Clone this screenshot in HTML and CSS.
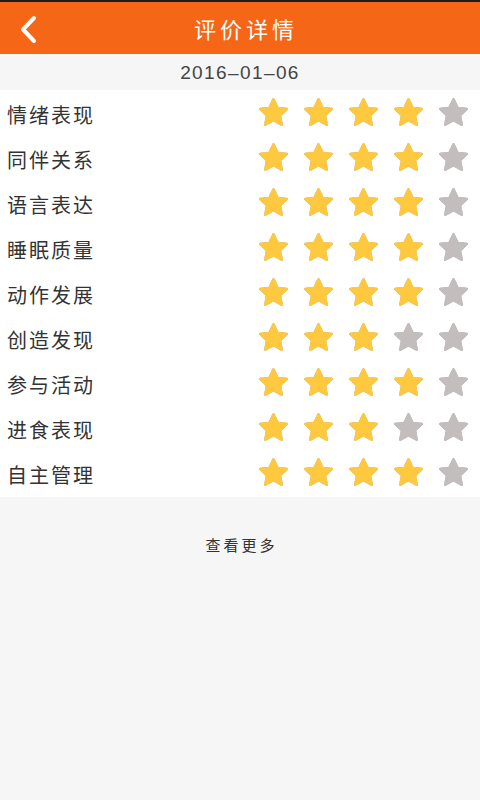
FILE: index.html
```html
<!DOCTYPE html>
<html lang="zh">
<head>
<meta charset="utf-8">
<title>评价详情</title>
<link rel="stylesheet" href="styles.css">
</head>
<body>
<svg class="defs" width="0" height="0" aria-hidden="true">
  <symbol id="star" viewBox="1.3 1.5 21.4 20.2">
    <path d="M12 2.8l2.8 5.9 6.4.8-4.7 4.5 1.2 6.4L12 17.3l-5.7 3.1 1.2-6.4-4.7-4.5 6.4-.8z" fill="currentColor" stroke="currentColor" stroke-width="1.6" stroke-linejoin="round"/>
  </symbol>
</svg>
<header class="topbar">
  <a class="back" href="#" aria-label="返回">
    <svg width="20" height="30" viewBox="0 0 20 30"><path d="M14 4L3 15.5 14 27" fill="none" stroke="#fff" stroke-width="4" stroke-linecap="round" stroke-linejoin="round"/></svg>
  </a>
  <h1 class="title">评价详情</h1>
</header>
<div class="datebar">2016–01–06</div>
<ul class="list">
  <li class="row"><span class="label">情绪表现</span><span class="stars"><svg class="s on"><use href="#star"/></svg><svg class="s on"><use href="#star"/></svg><svg class="s on"><use href="#star"/></svg><svg class="s on"><use href="#star"/></svg><svg class="s"><use href="#star"/></svg></span></li>
  <li class="row"><span class="label">同伴关系</span><span class="stars"><svg class="s on"><use href="#star"/></svg><svg class="s on"><use href="#star"/></svg><svg class="s on"><use href="#star"/></svg><svg class="s on"><use href="#star"/></svg><svg class="s"><use href="#star"/></svg></span></li>
  <li class="row"><span class="label">语言表达</span><span class="stars"><svg class="s on"><use href="#star"/></svg><svg class="s on"><use href="#star"/></svg><svg class="s on"><use href="#star"/></svg><svg class="s on"><use href="#star"/></svg><svg class="s"><use href="#star"/></svg></span></li>
  <li class="row"><span class="label">睡眠质量</span><span class="stars"><svg class="s on"><use href="#star"/></svg><svg class="s on"><use href="#star"/></svg><svg class="s on"><use href="#star"/></svg><svg class="s on"><use href="#star"/></svg><svg class="s"><use href="#star"/></svg></span></li>
  <li class="row"><span class="label">动作发展</span><span class="stars"><svg class="s on"><use href="#star"/></svg><svg class="s on"><use href="#star"/></svg><svg class="s on"><use href="#star"/></svg><svg class="s on"><use href="#star"/></svg><svg class="s"><use href="#star"/></svg></span></li>
  <li class="row"><span class="label">创造发现</span><span class="stars"><svg class="s on"><use href="#star"/></svg><svg class="s on"><use href="#star"/></svg><svg class="s on"><use href="#star"/></svg><svg class="s"><use href="#star"/></svg><svg class="s"><use href="#star"/></svg></span></li>
  <li class="row"><span class="label">参与活动</span><span class="stars"><svg class="s on"><use href="#star"/></svg><svg class="s on"><use href="#star"/></svg><svg class="s on"><use href="#star"/></svg><svg class="s on"><use href="#star"/></svg><svg class="s"><use href="#star"/></svg></span></li>
  <li class="row"><span class="label">进食表现</span><span class="stars"><svg class="s on"><use href="#star"/></svg><svg class="s on"><use href="#star"/></svg><svg class="s on"><use href="#star"/></svg><svg class="s"><use href="#star"/></svg><svg class="s"><use href="#star"/></svg></span></li>
  <li class="row"><span class="label">自主管理</span><span class="stars"><svg class="s on"><use href="#star"/></svg><svg class="s on"><use href="#star"/></svg><svg class="s on"><use href="#star"/></svg><svg class="s on"><use href="#star"/></svg><svg class="s"><use href="#star"/></svg></span></li>
</ul>
<div class="more">查看更多</div>
</body>
</html>
```

FILE: styles.css
```css
* { box-sizing: border-box; }
html, body {
  margin: 0;
  padding: 0;
  background: #f6f6f6;
  font-family: "Noto Sans CJK SC", "Noto Sans", sans-serif;
  color: #333;
}
.defs { position: absolute; width: 0; height: 0; overflow: hidden; }
.topbar {
  height: 54px;
  border-top: 2px solid #1c1c1c;
  background: #f56617;
  display: flex;
  align-items: center;
  justify-content: center;
  position: relative;
}
.back {
  position: absolute;
  left: 20px;
  top: 12px;
  display: block;
  width: 20px;
  height: 30px;
}
.back svg { display: block; }
.title {
  margin: 0;
  color: #fff;
  font-size: 22px;
  font-weight: normal;
  letter-spacing: 4px;
  padding-left: 12px;
  line-height: 1;
}
.datebar {
  height: 36px;
  display: flex;
  align-items: center;
  justify-content: center;
  font-family: "Liberation Sans", Arial, sans-serif;
  font-size: 19px;
  letter-spacing: 1.4px;
  color: #444;
  padding-top: 2px;
}
.list {
  list-style: none;
  margin: 0;
  padding: 0 0 2px;
  background: #fff;
}
.row {
  height: 45px;
  display: flex;
  align-items: center;
  justify-content: space-between;
  padding: 0 11px 0 7px;
}
.label {
  font-size: 20px;
  letter-spacing: 2px;
  color: #333;
  padding-top: 4px;
}
.stars {
  display: flex;
  gap: 14px;
  padding-bottom: 1px;
}
.s {
  width: 31px;
  height: 30px;
  color: #c3bdbd;
  filter: drop-shadow(0 0 0.6px rgba(0, 0, 0, 0.3));
}
.s.on { color: #fec83f; }
.more {
  text-align: center;
  font-size: 15px;
  letter-spacing: 3px;
  padding-left: 3px;
  color: #333;
  margin-top: 37px;
}
```
